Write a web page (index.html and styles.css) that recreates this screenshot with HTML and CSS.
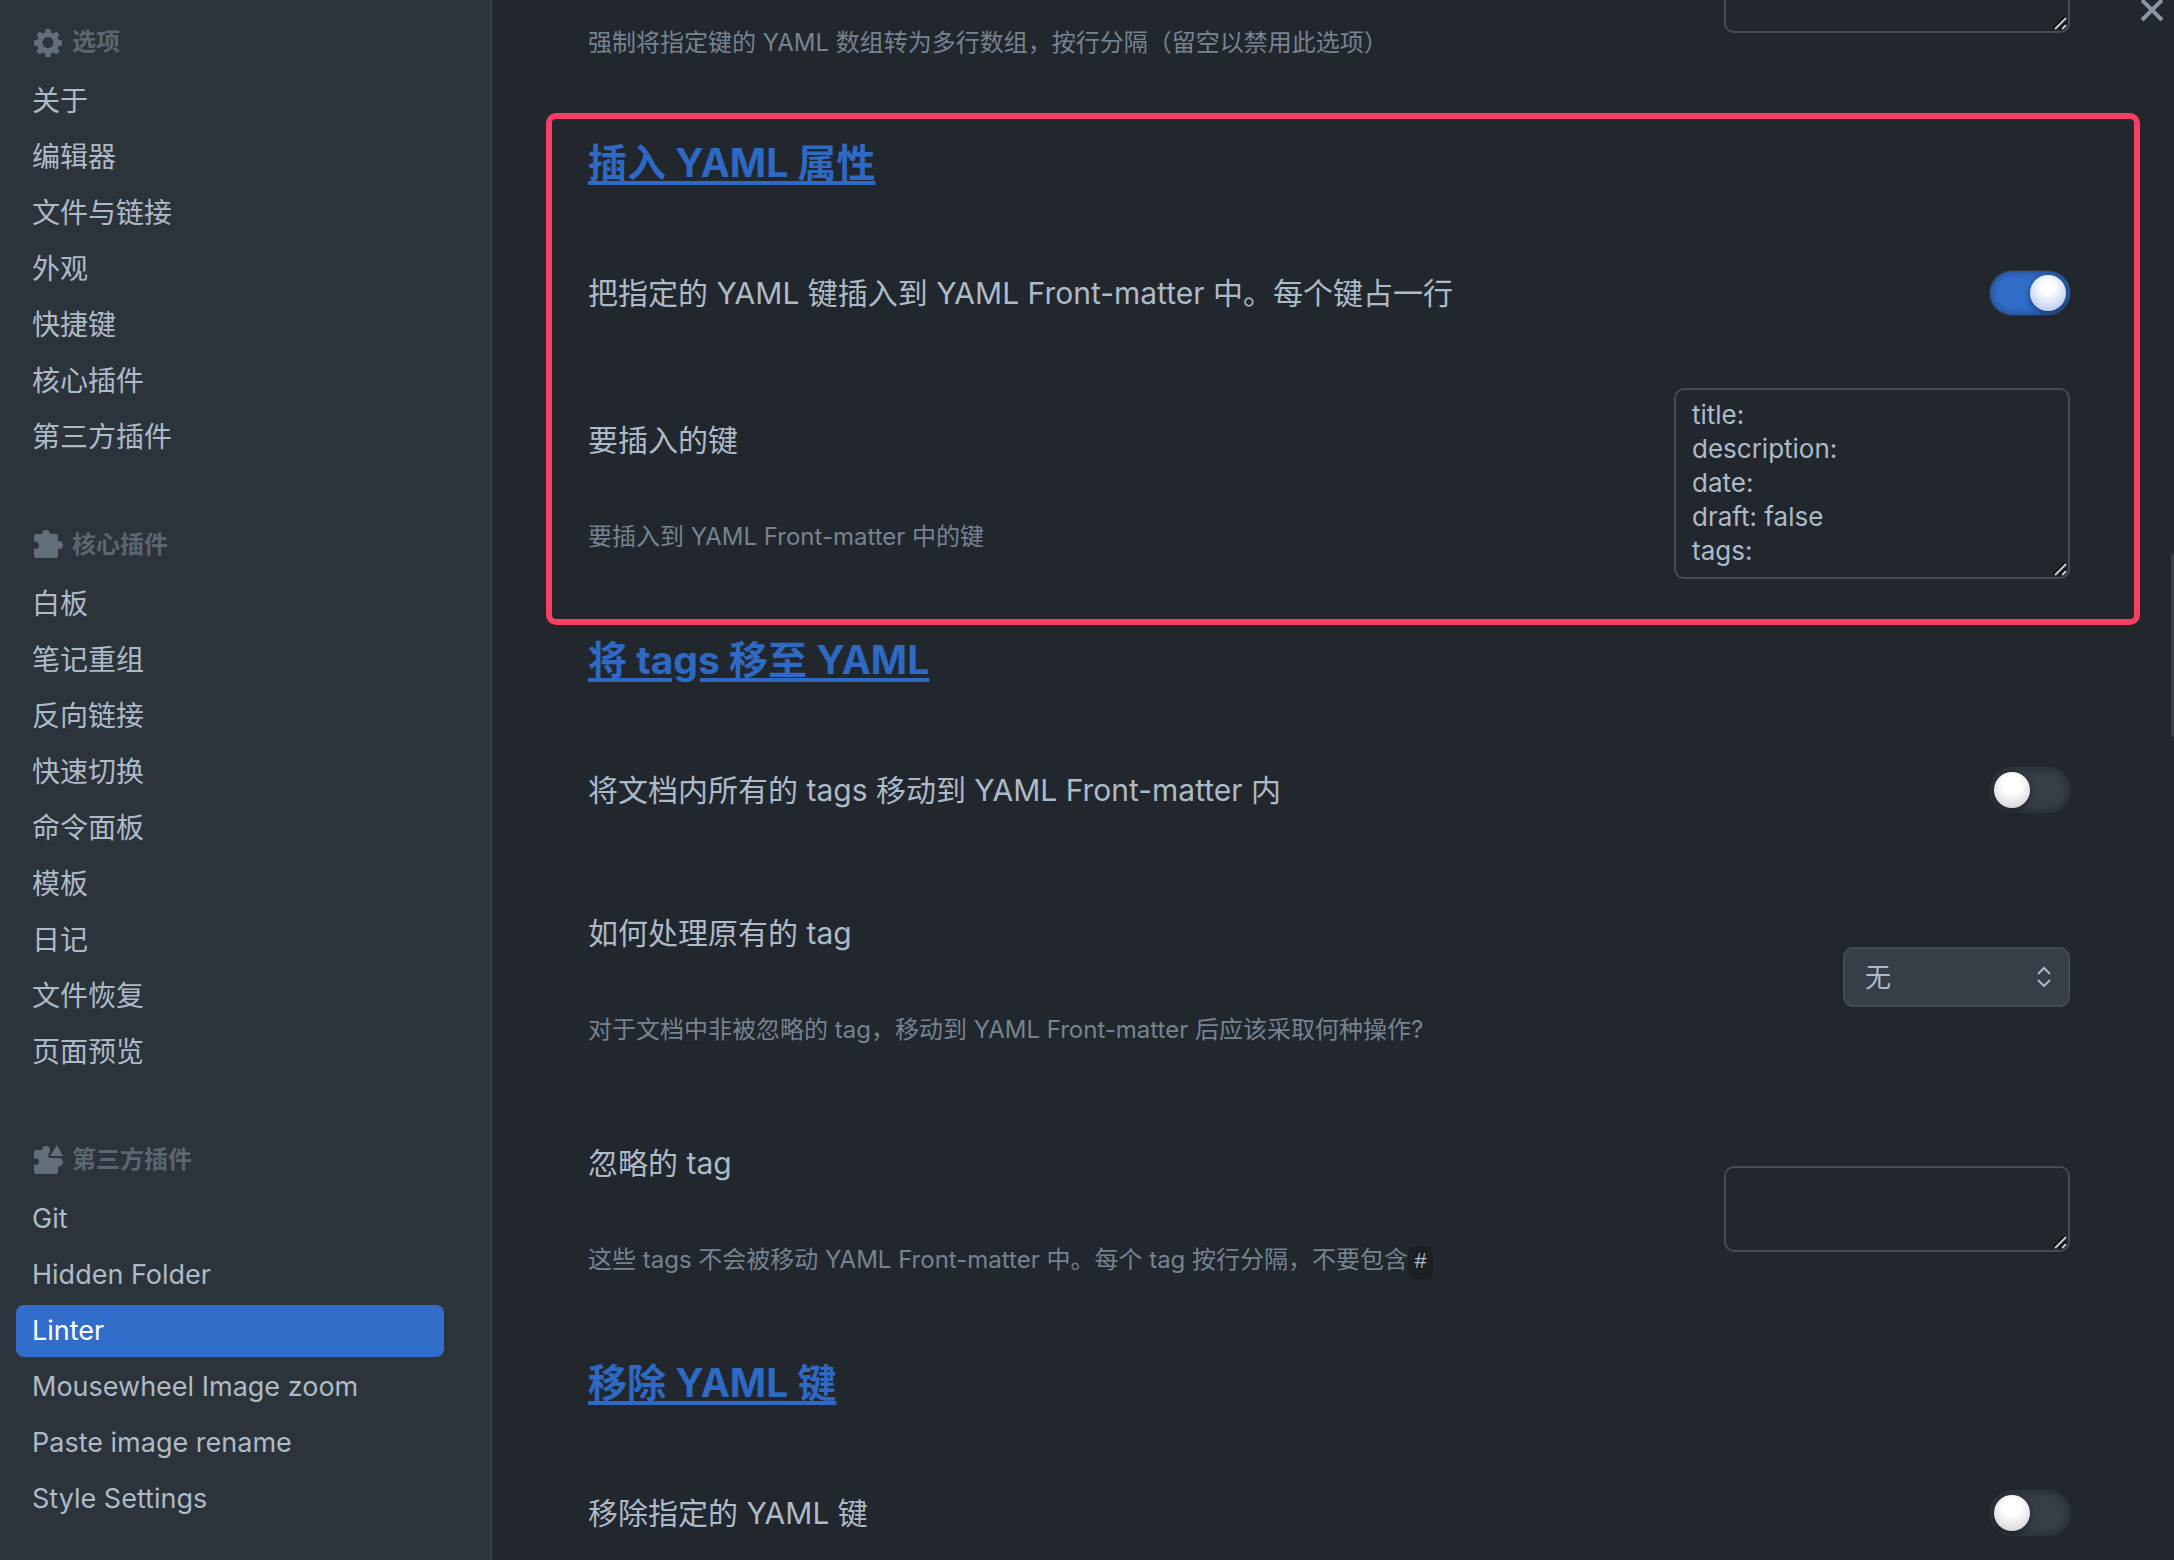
FILE: index.html
```html
<!DOCTYPE html>
<html lang="zh-CN">
<head>
<meta charset="utf-8">
<title>Linter</title>
<link rel="stylesheet" href="styles.css">
</head>
<body>
<div class="settings">
  <nav class="sidebar">
    <section class="group">
      <h2 class="group-title">
        <svg class="group-icon" viewBox="0 0 32 32" aria-hidden="true"><path fill-rule="evenodd" d="M13.6 3h4.800l.6 3.400 2.400 1 2.900-2 3.300 3.300-2 2.900 1 2.400 3.400.6v4.800l-3.400.6-1 2.400 2 2.900-3.300 3.300-2.900-2-2.400 1-.6 3.400h-4.800l-.6-3.400-2.400-1-2.900 2-3.300-3.300 2-2.900-1-2.400-3.400-.6v-4.800l3.400-.6 1-2.400-2-2.900 3.300-3.300 2.900 2 2.400-1zM16 11a5.500 5.500 0 1 0 0 11a5.500 5.500 0 1 0 0-11z"/></svg>
        选项
      </h2>
      <ul class="items">
        <li><a class="item" href="#about">关于</a></li>
        <li><a class="item" href="#editor">编辑器</a></li>
        <li><a class="item" href="#files">文件与链接</a></li>
        <li><a class="item" href="#appearance">外观</a></li>
        <li><a class="item" href="#hotkeys">快捷键</a></li>
        <li><a class="item" href="#core">核心插件</a></li>
        <li><a class="item" href="#community">第三方插件</a></li>
      </ul>
    </section>
    <section class="group">
      <h2 class="group-title">
        <svg class="group-icon" viewBox="0 0 32 32" aria-hidden="true"><path d="M4 5h6c0-2 1.500-4 4-4s4 2 4 4h6q2 0 2 2v5c3-.5 5 1.500 5 4s-2 4.500-5 4v7q0 2-2 2H4q-2 0-2-2v-7c3 .5 5-1 5-3.500S5 12 2 12.500V7q0-2 2-2z"/></svg>
        核心插件
      </h2>
      <ul class="items">
        <li><a class="item" href="#canvas">白板</a></li>
        <li><a class="item" href="#composer">笔记重组</a></li>
        <li><a class="item" href="#backlinks">反向链接</a></li>
        <li><a class="item" href="#switcher">快速切换</a></li>
        <li><a class="item" href="#palette">命令面板</a></li>
        <li><a class="item" href="#templates">模板</a></li>
        <li><a class="item" href="#daily">日记</a></li>
        <li><a class="item" href="#recovery">文件恢复</a></li>
        <li><a class="item" href="#preview">页面预览</a></li>
      </ul>
    </section>
    <section class="group">
      <h2 class="group-title">
        <svg class="group-icon" viewBox="0 0 32 32" aria-hidden="true"><path d="M4 6h6c0-2 1.500-4 4-4s4.500 2 4 5l-2 5q0 2 2 2h8c3-.5 5 1.500 5 4s-2 4.500-5 4.500V28q0 2-2 2H4q-2 0-2-2v-7c3 .5 5-1 5-3.500S5 14 2 14.500V8q0-2 2-2z"/><path d="M25 1l6 11H18z"/></svg>
        第三方插件
      </h2>
      <ul class="items" lang="en">
        <li><a class="item" href="#git">Git</a></li>
        <li><a class="item" href="#hidden-folder">Hidden Folder</a></li>
        <li><a class="item item-active" href="#linter" aria-current="page">Linter</a></li>
        <li><a class="item" href="#mousewheel">Mousewheel Image zoom</a></li>
        <li><a class="item" href="#paste-rename">Paste image rename</a></li>
        <li><a class="item" href="#style-settings">Style Settings</a></li>
      </ul>
    </section>
  </nav>

  <main class="content">
    <button class="close" type="button" aria-label="关闭">
      <svg viewBox="0 0 24 24" aria-hidden="true"><path d="M2 2l20 20M22 2L2 22"/></svg>
    </button>
    <div class="scroll-thumb"></div>

    <section class="rule">
      <div class="setting setting-described setting-scrolled">
        <div class="info">
          <label class="desc" for="multiline">强制将指定键的 YAML 数组转为多行数组，按行分隔（留空以禁用此选项）</label>
        </div>
        <textarea class="text-area" id="multiline"></textarea>
      </div>
    </section>

    <section class="rule rule-marked">
      <h3 class="rule-title"><a href="#insert-yaml">插入 YAML 属性</a></h3>
      <div class="setting">
        <div class="info"><label class="name" for="insert-on">把指定的 YAML 键插入到 YAML Front-matter 中。每个键占一行</label></div>
        <input class="toggle" type="checkbox" id="insert-on" checked>
      </div>
      <div class="setting setting-tall">
        <div class="info">
          <label class="name" for="insert-keys">要插入的键</label>
          <p class="desc">要插入到 YAML Front-matter 中的键</p>
        </div>
        <textarea class="text-area text-area-large" id="insert-keys">title:
description:
date:
draft: false
tags:</textarea>
      </div>
    </section>

    <section class="rule">
      <h3 class="rule-title"><a href="#move-tags">将 tags 移至 YAML</a></h3>
      <div class="setting">
        <div class="info"><label class="name" for="move-on">将文档内所有的 tags 移动到 YAML Front-matter 内</label></div>
        <input class="toggle" type="checkbox" id="move-on">
      </div>
      <div class="setting setting-described">
        <div class="info">
          <label class="name" for="tag-action">如何处理原有的 tag</label>
          <p class="desc">对于文档中非被忽略的 tag，移动到 YAML Front-matter 后应该采取何种操作?</p>
        </div>
        <div class="dropdown">
          <select id="tag-action"><option>无</option></select>
          <svg class="dropdown-icon" viewBox="0 0 16 24" aria-hidden="true"><path d="M2 9l6-6 6 6M2 15l6 6 6-6"/></svg>
        </div>
      </div>
      <div class="setting setting-described">
        <div class="info">
          <label class="name" for="ignored">忽略的 tag</label>
          <p class="desc">这些 tags 不会被移动 YAML Front-matter 中。每个 tag 按行分隔，不要包含<code>#</code></p>
        </div>
        <textarea class="text-area" id="ignored"></textarea>
      </div>
    </section>

    <section class="rule">
      <h3 class="rule-title"><a href="#remove-yaml">移除 YAML 键</a></h3>
      <div class="setting">
        <div class="info"><label class="name" for="remove-on">移除指定的 YAML 键</label></div>
        <input class="toggle" type="checkbox" id="remove-on">
      </div>
    </section>
  </main>
</div>
</body>
</html>
```

FILE: styles.css
```css
:root {
  --bg: #22272e;
  --bg-side: #2d333b;
  --border: #444c56;
  --text: #adbac7;
  --muted: #768390;
  --faint: #5c6671;
  --accent: #316dca;
}

* {
  box-sizing: border-box;
}

body {
  margin: 0;
  background: var(--bg);
  color: var(--text);
  font-family: Inter, "Noto Sans CJK SC", sans-serif;
}

.settings {
  display: flex;
  height: 100vh;
  overflow: hidden;
}

/* Sidebar */
.sidebar {
  flex: 0 0 492px;
  display: flex;
  flex-direction: column;
  gap: 66px;
  padding: 26px 46px 0 16px;
  background: var(--bg-side);
  border-right: 2px solid #373e47;
}

.group-title {
  display: flex;
  align-items: center;
  gap: 8px;
  margin: 0 0 17px;
  padding-left: 16px;
  color: var(--faint);
  font-size: 24px;
  line-height: 32px;
  font-weight: 600;
}

.group-icon {
  width: 32px;
  height: 32px;
  fill: #636e7b;
}

.items {
  display: flex;
  flex-direction: column;
  gap: 4px;
  margin: 0;
  padding: 0;
  font-size: 28px;
  list-style: none;
}

.items:lang(en) {
  font-size: 27px;
}

.item {
  display: block;
  padding: 0 16px;
  border-radius: 8px;
  color: var(--text);
  line-height: 52px;
  text-decoration: none;
}

.item-active {
  background: var(--accent);
  color: #fff;
}

/* Settings pane */
.content {
  position: relative;
  flex: 1;
  min-width: 0;
  display: flex;
  flex-direction: column;
  gap: 32px;
  padding: 0 104px 0 96px;
  overflow: hidden;
}

.rule {
  position: relative;
}

/* Highlight frame drawn over the marked rule */
.rule-marked::after {
  content: "";
  position: absolute;
  inset: -24px -70px -23px -42px;
  border: 6px solid #f83e63;
  border-radius: 10px;
  pointer-events: none;
}

.rule-title {
  margin: 0 0 32px;
  font-size: 39px;
  line-height: 52px;
  font-weight: 700;
}

.rule-title a {
  color: #2e69c3;
  text-decoration-thickness: 4px;
  text-underline-offset: 4px;
}

.setting {
  display: flex;
  align-items: center;
  justify-content: space-between;
  gap: 32px;
  padding: 45px 0;
}

.setting-described {
  padding: 44px 0;
}

.setting-tall {
  padding: 23px 0;
}

.setting-scrolled {
  align-items: flex-start;
  margin-top: -53px;
  padding-top: 0;
}

.setting-scrolled .info {
  padding-top: 78px;
}

.name {
  display: block;
  font-size: 30px;
  line-height: 54px;
}

.desc {
  display: block;
  margin: 0;
  color: var(--muted);
  font-size: 24px;
  line-height: 36px;
}

.name + .desc {
  margin-top: 52px;
}

.desc code {
  padding: 4px 6px;
  border-radius: 8px;
  background: #1c1f22;
  color: var(--text);
  font-family: "Liberation Mono", monospace;
  font-size: 22px;
}

/* Controls */
.text-area {
  display: block;
  width: 346px;
  height: 86px;
  padding: 8px 16px;
  border: 2px solid var(--border);
  border-radius: 10px;
  background: transparent;
  color: var(--text);
  font-family: inherit;
  font-size: 26px;
  line-height: 34px;
  resize: both;
}

.text-area::-webkit-resizer {
  background: url("data:image/svg+xml,%3Csvg xmlns='http://www.w3.org/2000/svg' viewBox='0 0 15 15'%3E%3Cpath d='M1 12L12 1M7 13L13 7' stroke='%23000' stroke-width='2'/%3E%3Cpath d='M2 13L13 2M9 13L13 9' stroke='%23c8c8c8' stroke-width='2'/%3E%3C/svg%3E") no-repeat center;
}

.text-area-large {
  width: 396px;
  height: 191px;
}

.toggle {
  appearance: none;
  flex: none;
  width: 80px;
  height: 44px;
  margin: 0;
  padding: 4px;
  border-radius: 22px;
  background: #373e47;
  box-shadow: inset 0 0 8px rgba(0, 0, 0, 0.4), 0 0 0 1px #30363e;
}

.toggle::before {
  content: "";
  display: block;
  width: 36px;
  height: 36px;
  border-radius: 50%;
  background: radial-gradient(circle at 50% 35%, #fff 30%, #c8c8c8 100%);
  box-shadow: 0 2px 6px rgba(0, 0, 0, 0.5);
}

.toggle:checked {
  background: var(--accent);
}

.toggle:checked::before {
  margin-left: 36px;
  background: radial-gradient(circle at 50% 35%, #fff 20%, #a4bcec 100%);
}

.dropdown {
  position: relative;
  flex: none;
}

.dropdown select {
  appearance: none;
  display: block;
  width: 227px;
  height: 60px;
  padding: 0 20px;
  border: 2px solid var(--border);
  border-radius: 10px;
  background: #373e47;
  color: var(--text);
  font-family: inherit;
  font-size: 26px;
}

.dropdown-icon {
  position: absolute;
  top: 18px;
  right: 18px;
  width: 16px;
  height: 24px;
  fill: none;
  stroke: var(--text);
  stroke-width: 2;
  pointer-events: none;
}

.close {
  position: absolute;
  top: -2px;
  right: 10px;
  width: 24px;
  height: 24px;
  padding: 0;
  border: 0;
  background: none;
}

.close svg {
  display: block;
  fill: none;
  stroke: #8a96a3;
  stroke-width: 4;
}

.scroll-thumb {
  position: absolute;
  top: 553px;
  right: 0;
  width: 3px;
  height: 184px;
  border-radius: 2px;
  background: #373e47;
}
```
